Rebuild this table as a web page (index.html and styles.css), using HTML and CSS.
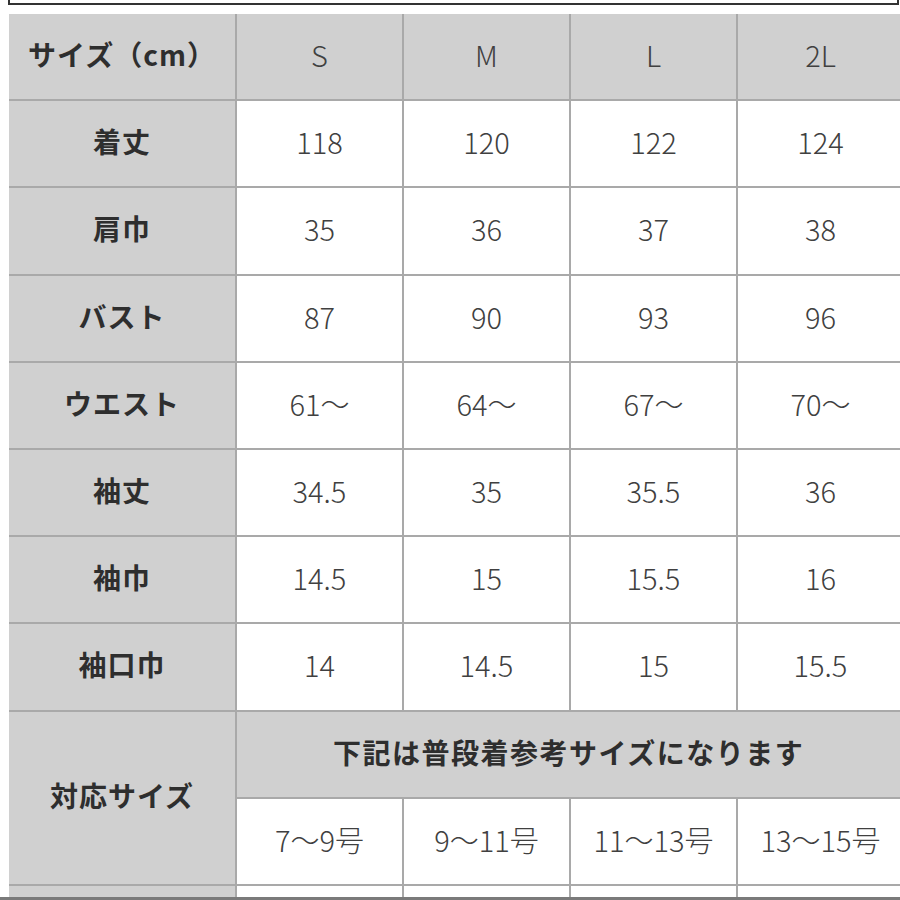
FILE: index.html
```html
<!DOCTYPE html>
<html lang="ja">
<head>
<meta charset="utf-8">
<link rel="stylesheet" href="styles.css">
</head>
<body>
<div class="frame"></div>
<div class="sheet">
  <div class="cell head label">サイズ（cm）</div>
  <div class="cell head">S</div>
  <div class="cell head">M</div>
  <div class="cell head">L</div>
  <div class="cell head">2L</div>

  <div class="cell label">着丈</div>
  <div class="cell">118</div><div class="cell">120</div><div class="cell">122</div><div class="cell">124</div>

  <div class="cell label">肩巾</div>
  <div class="cell">35</div><div class="cell">36</div><div class="cell">37</div><div class="cell">38</div>

  <div class="cell label">バスト</div>
  <div class="cell">87</div><div class="cell">90</div><div class="cell">93</div><div class="cell">96</div>

  <div class="cell label">ウエスト</div>
  <div class="cell">61～</div><div class="cell">64～</div><div class="cell">67～</div><div class="cell">70～</div>

  <div class="cell label">袖丈</div>
  <div class="cell">34.5</div><div class="cell">35</div><div class="cell">35.5</div><div class="cell">36</div>

  <div class="cell label">袖巾</div>
  <div class="cell">14.5</div><div class="cell">15</div><div class="cell">15.5</div><div class="cell">16</div>

  <div class="cell label">袖口巾</div>
  <div class="cell">14</div><div class="cell">14.5</div><div class="cell">15</div><div class="cell">15.5</div>

  <div class="cell label span-rows">対応サイズ</div>
  <div class="cell head note span-cols">下記は普段着参考サイズになります</div>
  <div class="cell">7～9号</div><div class="cell">9～11号</div><div class="cell">11～13号</div><div class="cell">13～15号</div>

  <div class="cell label"></div>
  <div class="cell"></div><div class="cell"></div><div class="cell"></div><div class="cell"></div>
</div>
<div class="base"></div>
</body>
</html>
```

FILE: styles.css
```css
html, body {
  margin: 0;
  padding: 0;
  background: #ffffff;
  overflow: hidden;
  width: 900px;
  height: 900px;
}

body {
  font-family: "Noto Sans CJK JP", "Noto Sans", sans-serif;
  color: #444444;
}

.frame {
  margin-left: 8px;
  width: 887px;
  height: 3px;
  border: 2px solid #333333;
  border-top: none;
}

.sheet {
  margin-top: 9px;
  margin-left: 9px;
  width: 900px;
  display: grid;
  grid-template-columns: 226px 165px 165px 165px 165px;
  grid-template-rows: repeat(10, 85.2px) 11px;
  gap: 2px;
  background: #a9a9a9;
}

.cell {
  background: #ffffff;
  display: flex;
  align-items: center;
  justify-content: center;
  padding-bottom: 5px;
  font-size: 29px;
  font-weight: 300;
  color: #404040;
  white-space: nowrap;
  overflow: hidden;
}

.head {
  background: #d0d0d0;
}

.label {
  background: #d0d0d0;
  font-size: 28px;
  font-weight: 700;
  color: #2e2e2e;
  letter-spacing: 1px;
}

.note {
  font-size: 28px;
  font-weight: 700;
  color: #2e2e2e;
  letter-spacing: 1.5px;
  justify-content: flex-start;
  padding-left: 96px;
}

.span-rows {
  grid-row: span 2;
}

.span-cols {
  grid-column: span 4;
}

.base {
  width: 900px;
  height: 3px;
  background: #7a7a7a;
}
```
